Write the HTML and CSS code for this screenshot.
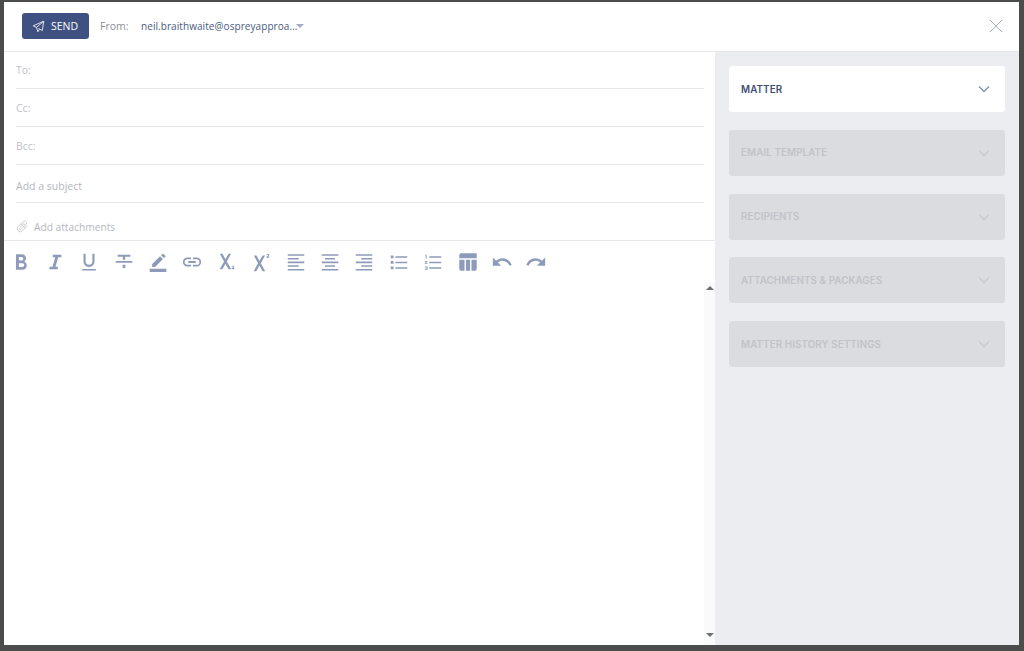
FILE: index.html
```html
<!DOCTYPE html>
<html lang="en">
<head>
<meta charset="utf-8">
<title>New email</title>
<link rel="stylesheet" href="styles.css">
</head>
<body>
<div class="modal">
  <header class="topbar">
    <button class="send" type="button">
      <svg class="send-icon" viewBox="0 0 16 16"><path d="M14.5 1.5 1.5 7.2l4 1.9 1.8 5.4 1.9-3.1M14.5 1.5 5.5 9.1M14.5 1.5 12.6 13 7.9 10.4"/></svg>
      <span>SEND</span>
    </button>
    <span class="from-label">From:</span>
    <span class="from-value">
      <span class="from-text">neil.braithwaite@ospreyapproa...</span>
      <i class="caret"></i>
    </span>
    <svg class="close" viewBox="0 0 14 14"><path d="M1 1l12 12M13 1 1 13"/></svg>
  </header>
  <div class="main">
    <section class="compose">
      <div class="fields">
        <div class="field">To:</div>
        <div class="field">Cc:</div>
        <div class="field">Bcc:</div>
        <div class="field">Add a subject</div>
      </div>
      <div class="attach">
        <svg class="clip" viewBox="0 0 24 24"><path d="M20.5 11.5 12 20a5.6 5.6 0 0 1-8-8l9-9a3.8 3.8 0 0 1 5.4 5.4l-9 9a1.9 1.9 0 0 1-2.7-2.7l8.4-8.4"/><path d="M9 7l8 8M12 5l7 7"/></svg>
        <span>Add attachments</span>
      </div>
      <div class="toolbar">
        <span class="tool"><svg viewBox="0 0 24 24"><path class="f" d="M15.6 11.400c1.200-.8 1.900-2 1.900-3.400 0-2.500-1.900-4.500-4.400-4.500H6.500v17h7.400c2.500 0 4.400-2 4.400-4.600 0-1.900-1-3.600-2.700-4.500zM9.700 6.500h3a1.900 1.900 0 0 1 0 3.800h-3zm3.800 11h-3.800v-4.200h3.800a2.100 2.100 0 0 1 0 4.200z"/></svg></span>
        <span class="tool"><svg viewBox="0 0 24 24"><path class="f" d="M9.500 4v2.800h2.800L9.300 17.200H6V20h9v-2.800h-2.500l3-10.400H19V4z"/></svg></span>
        <span class="tool"><svg viewBox="0 0 24 24"><path class="f" d="M12 17.500c3.500 0 6-2.700 6-6.200V3h-2.300v8.300a3.700 3.700 0 0 1-7.400 0V3H6v8.300c0 3.500 2.500 6.200 6 6.200zM4.500 19.500v1.800h15v-1.800z"/></svg></span>
        <span class="tool"><svg viewBox="0 0 24 24"><path class="f" d="M3 11h18v1.800H3zM5 4h14v2.200h-5.700V9.500h-2.600V6.200H5zM10.500 15h3v3.500h-3z"/></svg></span>
        <span class="tool"><svg class="pen" viewBox="0 0 24 24"><path class="f" d="M5 14.500 14.500 5l3.500 3.500L8.500 18H5zM15.700 3.800l1.500-1.500a1 1 0 0 1 1.400 0l2.100 2.100a1 1 0 0 1 0 1.400l-1.500 1.500zM2 20h20v4H2z"/></svg></span>
        <span class="tool"><svg viewBox="0 0 24 24"><path class="f" d="M3.900 12c0-1.700 1.400-3.100 3.100-3.100h4V7H7a5 5 0 0 0 0 10h4v-1.900H7c-1.700 0-3.100-1.400-3.100-3.100zM8 13h8v-2H8zm9-6h-4v1.900h4a3.100 3.100 0 0 1 0 6.200h-4V17h4a5 5 0 0 0 0-10z"/></svg></span>
        <span class="tool"><svg viewBox="0 0 24 24"><path class="f" d="M4.200 3h2.900l3.200 6 3.400-6h2.700l-4.600 8.400 4.800 8.600h-2.900l-3.400-6.200L6.900 20H4l4.800-8.600z"/><path class="f" d="M17.400 18.600h2.600v1.400h-3v-1c1.200-.8 1.800-1.300 1.800-1.700 0-.5-.9-.4-1.600-.1v-1c1-.4 2.800-.4 2.800 1 0 .8-1.200 1.500-2.600 2.400z"/></svg></span>
        <span class="tool"><svg viewBox="0 0 24 24"><path class="f" d="M4.200 5h2.900l3.200 6 3.400-6h2.700l-4.600 8.400 4.800 8.600h-2.900l-3.400-6.200L6.900 22H4l4.800-8.600z"/><path class="f" d="M18.400 6h2.600v1.400h-3v-1c1.200-.8 1.800-1.300 1.800-1.700 0-.5-.9-.4-1.600-.1v-1c1-.4 2.800-.4 2.800 1 0 .8-1.200 1.500-2.600 2.400z"/></svg></span>
        <span class="tool"><svg viewBox="0 0 24 24"><path class="f" d="M3 3.500h18v1.800H3zM3 7.500h12v1.800H3zM3 11.500h18v1.800H3zM3 15.500h12v1.800H3zM3 19.500h18v1.800H3z"/></svg></span>
        <span class="tool"><svg viewBox="0 0 24 24"><path class="f" d="M3 3.500h18v1.800H3zM6.500 7.500h11v1.800h-11zM3 11.500h18v1.800H3zM6.500 15.500h11v1.800h-11zM3 19.500h18v1.800H3z"/></svg></span>
        <span class="tool"><svg viewBox="0 0 24 24"><path class="f" d="M3 3.500h18v1.800H3zM9 7.500h12v1.800H9zM3 11.500h18v1.800H3zM9 15.500h12v1.800H9zM3 19.500h18v1.800H3z"/></svg></span>
        <span class="tool"><svg viewBox="0 0 24 24"><path class="f" d="M3 5h3v3H3zM3 11h3v3H3zM3 17h3v3H3zM8 5.700h13v1.600H8zM8 11.700h13v1.600H8zM8 17.700h13v1.600H8z"/></svg></span>
        <span class="tool"><svg viewBox="0 0 24 24"><path class="f" d="M8 5.700h13v1.600H8zM8 11.700h13v1.600H8zM8 17.700h13v1.600H8zM3.500 4H5v4.500H4V5H3.500zM3 11h3v.8L4.300 13H6v.8H3V13l1.800-1.200H3zM3 17h3v3.500H3v-.8h2v-.6H3.800v-.7H5v-.6H3z"/></svg></span>
        <span class="tool"><svg viewBox="0 0 24 24"><path class="f" d="M4.500 2.500h15A1.500 1.500 0 0 1 21.500 4.500V8h-19V4.500a2 2 0 0 1 2-2zM2.500 9.500h5.700V21.500H4.500a2 2 0 0 1-2-2zM9.700 9.500h4.600V21.500H9.700zM15.800 9.500h5.700v10a2 2 0 0 1-2 2h-3.700z"/></svg></span>
        <span class="tool"><svg viewBox="0 0 24 24"><path class="f" d="M12.500 8c-2.650 0-5.050 1-6.900 2.600L2 7v9h9l-3.620-3.620c1.390-1.160 3.160-1.880 5.120-1.880 3.540 0 6.550 2.310 7.600 5.500l2.370-.78C21.080 11.030 17.150 8 12.500 8z"/></svg></span>
        <span class="tool"><svg viewBox="0 0 24 24"><path class="f" d="M18.400 10.600C16.550 9 14.150 8 11.500 8c-4.650 0-8.580 3.030-9.960 7.220L3.900 16c1.050-3.190 4.050-5.500 7.600-5.500 1.950 0 3.730.72 5.120 1.880L13 16h9V7z"/></svg></span>
      </div>
      <div class="editor">
        <div class="scrollbar"><i class="arrow-up"></i><i class="arrow-down"></i></div>
      </div>
    </section>
    <aside class="sidebar">
      <div class="card active"><span>MATTER</span><svg class="chev" viewBox="0 0 12 8"><path d="M1 1.500 6 6.500l5-5"/></svg></div>
      <div class="card"><span>EMAIL TEMPLATE</span><svg class="chev" viewBox="0 0 12 8"><path d="M1 1.500 6 6.500l5-5"/></svg></div>
      <div class="card"><span>RECIPIENTS</span><svg class="chev" viewBox="0 0 12 8"><path d="M1 1.500 6 6.500l5-5"/></svg></div>
      <div class="card"><span>ATTACHMENTS &amp; PACKAGES</span><svg class="chev" viewBox="0 0 12 8"><path d="M1 1.500 6 6.500l5-5"/></svg></div>
      <div class="card"><span>MATTER HISTORY SETTINGS</span><svg class="chev" viewBox="0 0 12 8"><path d="M1 1.500 6 6.500l5-5"/></svg></div>
    </aside>
  </div>
</div>
</body>
</html>
```
FILE: styles.css
```css
* { box-sizing: border-box; }
html, body { height: 100%; }
body {
  margin: 0;
  padding: 2px 5px 6px 4px;
  background: #4b4c4c;
  font-family: "Open Sans", "Noto Sans", sans-serif;
  overflow: hidden;
}
.modal {
  height: 100%;
  background: #fff;
  display: flex;
  flex-direction: column;
}
.topbar {
  height: 50px;
  flex: none;
  display: flex;
  align-items: center;
  padding: 0 16px 1px 18px;
  border-bottom: 1px solid #e6e7ea;
}
.send {
  width: 67px;
  height: 26px;
  border: 0;
  border-radius: 3px;
  background: #3e5180;
  color: #fff;
  font: 500 10.5px "Open Sans", sans-serif;
  display: flex;
  align-items: center;
  justify-content: center;
  gap: 6px;
  padding: 0 1px 0 0;
}
.send-icon { width: 13px; height: 13px; fill: none; stroke: #fff; stroke-width: 1; }
.from-label { margin-left: 11px; font-size: 10.5px; color: #8c8f96; width: 41px; }
.from-value { display: flex; align-items: center; color: #4a5a7d; font-size: 10px; letter-spacing: .07px; }
.from-text { width: 157px; white-space: nowrap; }
.caret {
  margin-left: -2px;
  width: 0;
  height: 0;
  border: 4px solid transparent;
  border-top: 4px solid #a3acc4;
  border-bottom: 0;
}
.close { margin-left: auto; width: 14px; height: 14px; fill: none; stroke: #a9afc4; stroke-width: 1; }
.main { flex: 1; display: flex; min-height: 0; }
.compose { flex: 1; min-width: 0; display: flex; flex-direction: column; }
.fields { padding: 0 11px 0 12px; }
.field {
  height: 38px;
  padding-top: 11px;
  border-bottom: 1px solid #e6e7ea;
  font-size: 10.5px;
  color: #c0c2c8;
  line-height: 16px;
}
.field:first-child { height: 37px; padding-top: 10px; }
.field:last-child { color: #b4b6bd; padding-top: 13px; }
.attach {
  height: 38px;
  flex: none;
  padding: 10px 0 0 12px;
  display: flex;
  align-items: center;
  gap: 5px;
  border-bottom: 1px solid #e6e7ea;
  font-size: 10.2px;
  color: #b4b6bd;
}
.clip { width: 13px; height: 13px; fill: none; stroke: #c6c8ce; stroke-width: 1.500; }
.toolbar { height: 41px; margin-left: -.7px; flex: none; display: flex; align-items: center; }
.tool { width: 34.4px; flex: none; display: flex; justify-content: center; }
.tool svg { width: 22px; height: 22px; }
.tool .pen { width: 20px; height: 20px; }
.f { fill: #8e9ab9; }
.editor { flex: 1; display: flex; justify-content: flex-end; min-height: 0; }
.scrollbar {
  width: 11px;
  background: #fafafb;
  display: flex;
  flex-direction: column;
  justify-content: space-between;
  align-items: center;
  padding: 4px 0 8px;
}
.arrow-up, .arrow-down { width: 0; height: 0; border: 4px solid transparent; }
.arrow-up { border-bottom: 4px solid #6f7073; border-top: 0; }
.arrow-down { border-top: 4px solid #6f7073; border-bottom: 0; }
.sidebar {
  width: 304px;
  flex: none;
  background: #ecedf1;
  padding: 14.1px 14px 0;
  display: flex;
  flex-direction: column;
  gap: 17.75px;
}
.card {
  height: 46px;
  flex: none;
  border-radius: 3px;
  background: #dbdcdf;
  display: flex;
  align-items: center;
  justify-content: space-between;
  padding: 0 15px 0 12px;
  font: 600 9.8px "Inter", sans-serif;
  letter-spacing: .1px;
  color: #c0c3c9;
}
.card.active { background: #fff; color: #3f4f74; }
.chev { width: 12px; height: 8px; fill: none; stroke: #c9cbd1; stroke-width: 1.500; }
.active .chev { stroke: #8792b0; }
```
